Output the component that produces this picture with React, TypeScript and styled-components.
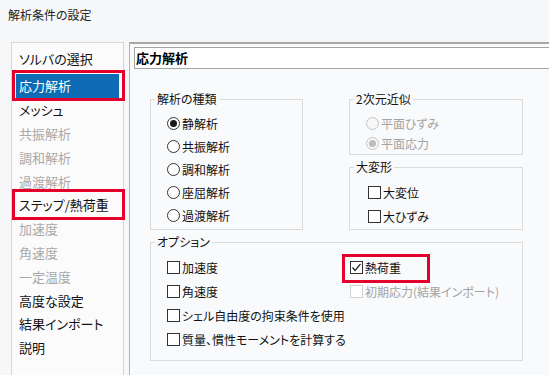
import React from 'react';
import styled, { createGlobalStyle, css } from 'styled-components';

const GlobalStyle = createGlobalStyle`
    html, body {
        margin: 0;
        padding: 0;
    }
    body {
        width: 549px;
        height: 375px;
        overflow: hidden;
        background: #f6f7f9;
        color: #111;
        font-family: "Noto Sans CJK JP", "Noto Sans", sans-serif;
        font-feature-settings: "palt";
    }
`;

const Page = styled.div`
    width: 549px;
    height: 375px;
    overflow: hidden;
`;

const Title = styled.div`
    height: 42px;
    box-sizing: border-box;
    padding: 7px 0 0 8px;
    font-size: 12px;
    line-height: 16px;
    color: #222;
`;

const Body = styled.div`
    display: flex;
    gap: 5px;
    padding-left: 11px;
`;

const Sidebar = styled.div`
    flex: 0 0 113px;
    box-sizing: border-box;
    height: 340px;
    padding-top: 4px;
    border: 1px solid #d6d6d6;
    border-bottom: none;
    background: #fbfbfc;
`;

const NavItem = styled.div<{ $active?: boolean; $disabled?: boolean; $marked?: boolean }>`
    position: relative;
    display: flex;
    align-items: center;
    height: 23.8px;
    margin: 0 4px;
    padding-left: 3px;
    font-size: 13px;
    color: ${p => (p.$disabled ? '#a9a9a9' : '#111')};
    ${p => p.$active && css`
        height: 24px;
        margin-top: 3px;
        background: #0e6cb4;
        color: #fff;
    `}
    ${p => p.$marked && css`
        &::after {
            content: '';
            position: absolute;
            top: -4px;
            bottom: -3px;
            left: -4px;
            right: -6px;
            border: 3px solid #e5002b;
        }
    `}
`;

const Main = styled.div`
    flex: 0 0 440px;
    box-sizing: border-box;
    height: 340px;
    padding: 3px 0 0 4px;
    border: 1px solid #b4b4b4;
    border-top: 2px solid #a8a8a8;
    border-bottom: none;
    background: #f9fafb;
`;

const Heading = styled.div`
    box-sizing: border-box;
    height: 22px;
    padding-left: 1px;
    border: 1px solid #a4a4a4;
    border-right: none;
    background: #fff;
    font-size: 13px;
    font-weight: bold;
    line-height: 20px;
    color: #000;
`;

const Content = styled.div`
    display: grid;
    grid-template-columns: 153px 174px;
    column-gap: 46px;
    row-gap: 5px;
    margin: 23px 0 0 16px;
`;

const Stack = styled.div`
    display: flex;
    flex-direction: column;
    gap: 5px;
`;

const Group = styled.fieldset<{ $pt?: number; $pb?: number; $wide?: boolean }>`
    margin: 0;
    min-inline-size: 0;
    padding: ${p => p.$pt ?? 6}px 0 ${p => p.$pb ?? 1}px 4px;
    border: 1px solid #dadada;
    ${p => p.$wide && css`grid-column: 1 / span 2;`}
`;

const Legend = styled.legend`
    padding: 0 2px;
    font-size: 12px;
    line-height: 14px;
    color: #111;
`;

const Options = styled.div`
    display: grid;
    grid-template-columns: 195px 1fr;
`;

const Item = styled.label<{ $h?: number; $indent?: number; $disabled?: boolean; $span?: boolean }>`
    display: flex;
    align-items: center;
    gap: 2px;
    height: ${p => p.$h ?? 24}px;
    margin-left: ${p => p.$indent ?? 12}px;
    font-size: 12px;
    white-space: nowrap;
    color: ${p => (p.$disabled ? '#a3a3a3' : '#111')};
    ${p => p.$span && css`grid-column: 1 / span 2;`}
`;

const Marked = styled.span`
    position: relative;
    display: inline-flex;
    align-items: center;
    gap: 2px;
    height: 24px;
    &::after {
        content: '';
        position: absolute;
        top: -1px;
        bottom: -4px;
        left: -8px;
        right: -29px;
        border: 3px solid #e5002b;
    }
`;

const RadioMark = styled.span<{ $on?: boolean; $disabled?: boolean }>`
    position: relative;
    flex: 0 0 auto;
    box-sizing: border-box;
    width: 13px;
    height: 13px;
    border-radius: 50%;
    border: 1px solid ${p => (p.$disabled ? '#c6c6c6' : '#333')};
    background: ${p => (p.$disabled ? '#f7f7f7' : '#fff')};
    ${p => p.$on && css`
        &::after {
            content: '';
            position: absolute;
            left: 2px;
            top: 2px;
            width: 7px;
            height: 7px;
            border-radius: 50%;
            background: ${p.$disabled ? '#bcbcbc' : '#1a1a1a'};
        }
    `}
`;

const BoxMark = styled.span<{ $disabled?: boolean }>`
    display: flex;
    flex: 0 0 auto;
    box-sizing: border-box;
    width: 13px;
    height: 13px;
    border: 1px solid ${p => (p.$disabled ? '#d2d2d2' : '#333')};
    background: #fff;
`;

const Radio: React.FC<{ label: string; on?: boolean; disabled?: boolean; h?: number }> = ({ label, on, disabled, h }) => (
    <Item $h={h} $disabled={disabled}>
        <RadioMark $on={on} $disabled={disabled} />
        {label}
    </Item>
);

const Check: React.FC<{ on?: boolean; disabled?: boolean }> = ({ on, disabled }) => (
    <BoxMark $disabled={disabled}>
        {on && (
            <svg width="11" height="11" viewBox="0 0 11 11">
                <polyline points="1.5,5.5 4,8.5 9.5,2" fill="none" stroke="#222" strokeWidth="1.2" />
            </svg>
        )}
    </BoxMark>
);

const nav = [
    { label: 'ソルバの選択' },
    { label: '応力解析', active: true, marked: true },
    { label: 'メッシュ' },
    { label: '共振解析', disabled: true },
    { label: '調和解析', disabled: true },
    { label: '過渡解析', disabled: true },
    { label: 'ステップ/熱荷重', marked: true },
    { label: '加速度', disabled: true },
    { label: '角速度', disabled: true },
    { label: '一定温度', disabled: true },
    { label: '高度な設定' },
    { label: '結果インポート' },
    { label: '説明' },
];

const kinds = ['静解析', '共振解析', '調和解析', '座屈解析', '過渡解析'];

export default function App() {
    return (
        <Page>
            <GlobalStyle />
            <Title>解析条件の設定</Title>
            <Body>
                <Sidebar>
                    {nav.map(n => (
                        <NavItem key={n.label} $active={n.active} $disabled={n.disabled} $marked={n.marked}>
                            {n.label}
                        </NavItem>
                    ))}
                </Sidebar>
                <Main>
                    <Heading>応力解析</Heading>
                    <Content>
                        <Group>
                            <Legend>解析の種類</Legend>
                            {kinds.map((k, i) => (
                                <Radio key={k} label={k} on={i === 0} h={23} />
                            ))}
                        </Group>
                        <Stack>
                            <Group $pt={7}>
                                <Legend>2次元近似</Legend>
                                <Radio label="平面ひずみ" disabled h={20} />
                                <Radio label="平面応力" on disabled h={20} />
                            </Group>
                            <Group>
                                <Legend>大変形</Legend>
                                <Item $indent={14}>
                                    <Check />
                                    大変位
                                </Item>
                                <Item $indent={14}>
                                    <Check />
                                    大ひずみ
                                </Item>
                            </Group>
                        </Stack>
                        <Group $wide $pb={9}>
                            <Legend>オプション</Legend>
                            <Options>
                                <Item>
                                    <Check />
                                    加速度
                                </Item>
                                <Item $indent={0}>
                                    <Marked>
                                        <Check on />
                                        熱荷重
                                    </Marked>
                                </Item>
                                <Item>
                                    <Check />
                                    角速度
                                </Item>
                                <Item $indent={0} $disabled>
                                    <Check disabled />
                                    初期応力(結果インポート)
                                </Item>
                                <Item $span>
                                    <Check />
                                    シェル自由度の拘束条件を使用
                                </Item>
                                <Item $span>
                                    <Check />
                                    質量、慣性モーメントを計算する
                                </Item>
                            </Options>
                        </Group>
                    </Content>
                </Main>
            </Body>
        </Page>
    );
}
